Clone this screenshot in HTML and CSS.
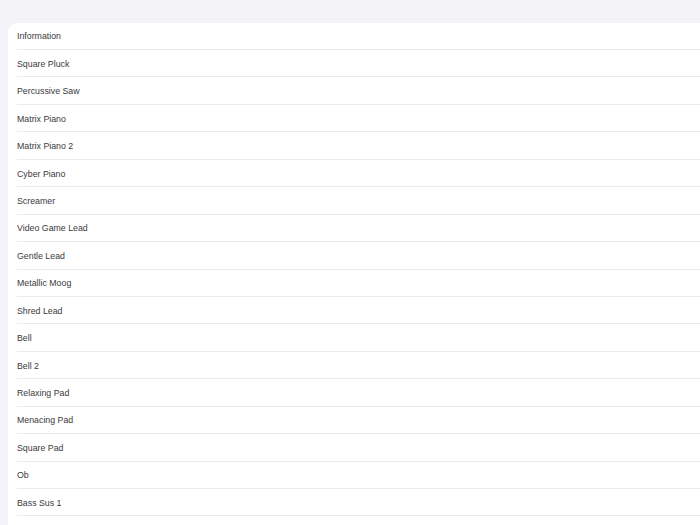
FILE: index.html
```html
<!DOCTYPE html>
<html>
<head>
<meta charset="utf-8">
<link rel="stylesheet" href="styles.css">
</head>
<body>
<ul class="list">
  <li class="row">Information</li>
  <li class="row">Square Pluck</li>
  <li class="row">Percussive Saw</li>
  <li class="row">Matrix Piano</li>
  <li class="row">Matrix Piano 2</li>
  <li class="row">Cyber Piano</li>
  <li class="row">Screamer</li>
  <li class="row">Video Game Lead</li>
  <li class="row">Gentle Lead</li>
  <li class="row">Metallic Moog</li>
  <li class="row">Shred Lead</li>
  <li class="row">Bell</li>
  <li class="row">Bell 2</li>
  <li class="row">Relaxing Pad</li>
  <li class="row">Menacing Pad</li>
  <li class="row">Square Pad</li>
  <li class="row">Ob</li>
  <li class="row">Bass Sus 1</li>
  <li class="row row-empty"></li>
</ul>
</body>
</html>
```
FILE: styles.css
```css
html, body {
  margin: 0;
  padding: 0;
  height: 100%;
  overflow: hidden;
  background: #f2f2f7;
}
body {
  padding: 22.6px 0 0 8px;
  box-sizing: border-box;
  font-family: "Liberation Sans", Arial, sans-serif;
}
.list {
  list-style: none;
  margin: 0;
  padding: 0 0 0 9px;
  background: #ffffff;
  border-radius: 9px 0 0 0;
}
.row {
  height: 27.44px;
  box-sizing: border-box;
  border-bottom: 1px solid #ebebee;
  display: flex;
  align-items: center;
  font-size: 8.8px;
  color: #3a3a3c;
  padding-top: 1px;
}
```
